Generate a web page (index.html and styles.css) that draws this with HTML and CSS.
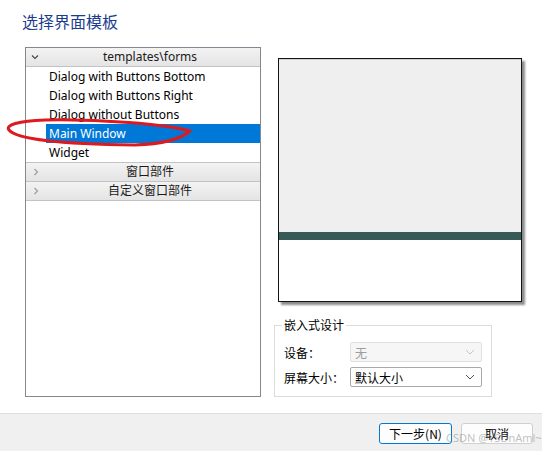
FILE: index.html
```html
<!DOCTYPE html>
<html lang="zh-CN">
<head>
  <meta charset="UTF-8" />
  <title>选择界面模板</title>
  <link rel="stylesheet" href="styles.css">
</head>
<body>
  <div class="dialog">
    <h1 class="title">选择界面模板</h1>

    <div class="content">
      <div class="tree">
        <div class="group-head">
          <svg class="chev" width="8" height="6" viewBox="0 0 8 6"><path d="M1 1.5 L4 4.5 L7 1.5" fill="none" stroke="#444" stroke-width="1.1"/></svg>
          templates\forms
        </div>
        <ul class="items">
          <li>Dialog with Buttons Bottom</li>
          <li>Dialog with Buttons Right</li>
          <li>Dialog without Buttons</li>
          <li class="selected">Main Window</li>
          <li>Widget</li>
        </ul>
        <div class="group-head closed">
          <svg class="chev" width="6" height="8" viewBox="0 0 6 8"><path d="M1.5 1 L4.5 4 L1.5 7" fill="none" stroke="#9a9a9a" stroke-width="1.1"/></svg>
          窗口部件
        </div>
        <div class="group-head closed">
          <svg class="chev" width="6" height="8" viewBox="0 0 6 8"><path d="M1.5 1 L4.5 4 L1.5 7" fill="none" stroke="#9a9a9a" stroke-width="1.1"/></svg>
          自定义窗口部件
        </div>
      </div>

      <div class="side">
        <div class="preview">
          <div class="preview-client"></div>
          <div class="preview-bar"></div>
          <div class="preview-bottom"></div>
        </div>

        <fieldset class="embedded">
          <legend>嵌入式设计</legend>
          <div class="form-row">
            <label>设备：</label>
            <div class="combo disabled">无
              <svg width="10" height="6" viewBox="0 0 10 6"><path d="M1 1 L5 5 L9 1" fill="none" stroke="#c4c4c4" stroke-width="1"/></svg>
            </div>
          </div>
          <div class="form-row">
            <label>屏幕大小：</label>
            <div class="combo">默认大小
              <svg width="10" height="6" viewBox="0 0 10 6"><path d="M1 1 L5 5 L9 1" fill="none" stroke="#555" stroke-width="1"/></svg>
            </div>
          </div>
        </fieldset>
      </div>
    </div>

    <div class="footer">
      <button class="btn default">下一步(N)</button>
      <button class="btn">取消</button>
    </div>

    <!-- 红色圈注 -->
    <svg class="markup" width="542" height="451" viewBox="0 0 542 451">
      <path d="M190 131 C165 124 100 119 45 120 C18 121 5 125 9 130 C16 139 60 144 135 145 C165 144 182 138 190 131"
            fill="none" stroke="#dc1a1f" stroke-width="3" stroke-linecap="round"/>
    </svg>
    <span class="watermark">CSDN @YSDnAml~</span>
  </div>
</body>
</html>
```

FILE: styles.css
```css
* {
  margin: 0;
  padding: 0;
  box-sizing: border-box;
}

body {
  font-family: "Noto Sans", "Noto Sans CJK SC", sans-serif;
  font-size: 12px;
  color: #000;
  background: #fff;
}

.dialog {
  position: relative;
  width: 542px;
  height: 451px;
  overflow: hidden;
}

.title {
  height: 47px;
  padding: 10px 0 0 22px;
  font-size: 16px;
  line-height: 22px;
  font-weight: normal;
  color: #1b3d8f;
  font-family: "Noto Sans CJK SC", sans-serif;
}

.content {
  display: flex;
  gap: 13px;
  padding-left: 25px;
  height: 350px;
}

/* 左侧模板列表 */
.tree {
  width: 236px;
  height: 350px;
  border: 1px solid #828790;
}

.group-head {
  position: relative;
  height: 19px;
  line-height: 18px;
  padding-left: 14px;
  text-align: center;
  color: #1a1a1a;
  background: linear-gradient(#f3f3f3, #e4e4e4);
  border-bottom: 1px solid #c3c3c3;
}

.group-head .chev {
  position: absolute;
  left: 5px;
  top: 6px;
}

.group-head.closed .chev {
  left: 7px;
  top: 5px;
}

.items {
  list-style: none;
  border-bottom: 1px solid #c3c3c3;
}

.items li {
  height: 19px;
  line-height: 19px;
  margin-left: 20px;
  padding-left: 3px;
}

.items li.selected {
  background: #0078d7;
  color: #fff;
}

/* 右侧预览 */
.side {
  width: 250px;
}

.preview {
  width: 244px;
  height: 244px;
  margin: 11px 0 0 4px;
  border: 1px solid #141414;
  box-shadow: 3px 3px 2px rgba(0, 0, 0, 0.45);
  display: flex;
  flex-direction: column;
}

.preview-client {
  height: 173px;
  background: #efefef;
  border-top: 1px solid #c9d2ce;
}

.preview-bar {
  height: 8px;
  background: #365a55;
}

.preview-bottom {
  flex: 1;
  background: #fff;
}

.embedded {
  width: 218px;
  height: 80px;
  margin-top: 15px;
  border: 1px solid #dcdcdc;
  font-family: "Noto Sans CJK SC", sans-serif;
}

.embedded legend {
  margin-left: 7px;
  padding: 0 2px;
  line-height: 16px;
}

.form-row {
  display: flex;
  align-items: center;
  padding-left: 9px;
  margin-top: 9px;
  height: 20px;
}

.form-row + .form-row {
  margin-top: 5px;
}

.form-row label {
  width: 66px;
}

.combo {
  width: 132px;
  height: 20px;
  padding-left: 4px;
  border: 1px solid #a8a8a8;
  border-radius: 2px;
  background: #fff;
  display: flex;
  align-items: center;
  justify-content: space-between;
  padding-right: 6px;
}

.combo.disabled {
  color: #9c9c9c;
  background: #f6f6f6;
  border-color: #e0e0e0;
}

/* 底部按钮 */
.footer {
  margin-top: 16px;
  height: 38px;
  background: #f0f0f0;
  border-top: 1px solid #dfdfdf;
  display: flex;
  justify-content: flex-end;
  gap: 9px;
  padding: 9px 9px 0 0;
}

.btn {
  width: 72px;
  height: 21px;
  font-family: "Noto Sans CJK SC", sans-serif;
  font-size: 12px;
  background: #fdfdfd;
  border: 1px solid #d0d0d0;
  border-radius: 3px;
  color: #000;
}

.btn.default {
  width: 73px;
  border-color: #0078d7;
}

.markup {
  position: absolute;
  left: 0;
  top: 0;
  pointer-events: none;
}

.watermark {
  position: absolute;
  left: 446px;
  top: 430px;
  font-size: 11px;
  color: rgba(140, 140, 140, 0.55);
  font-family: "Noto Sans", sans-serif;
}
```
